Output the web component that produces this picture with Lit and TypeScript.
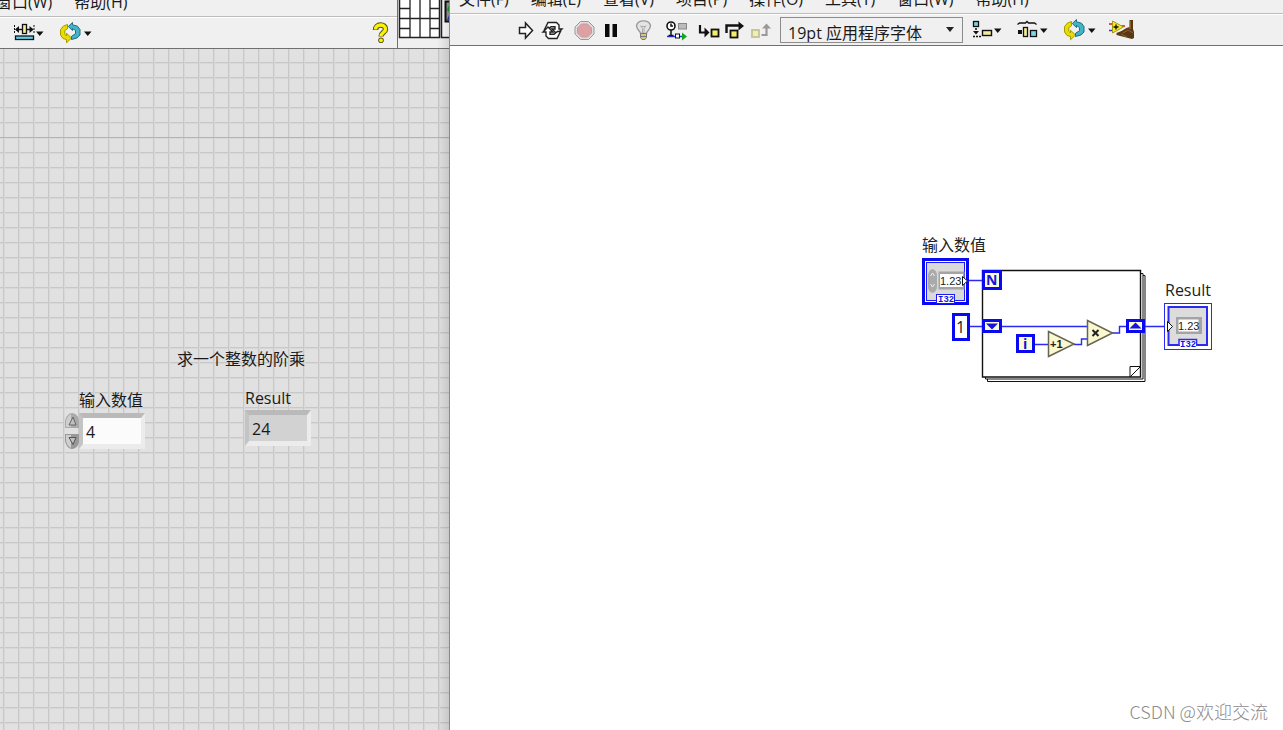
import { LitElement, html, svg, css } from "lit";
import { customElement } from "lit/decorators.js";

const caret = svg`<path d="M24 10.500h7.500l-3.750 4.500z" fill="#111" />`;

const cycle = svg`
  <path d="M9.500 3.500 L5.500 5 L2.500 8.500 V14 L5 17.500 L8.500 18.500 V21.800 L13.500 17 L8.500 12.300 V15 L6.800 13.200 V9.500 L9.500 7.800z" fill="#e8dc00" stroke="#a39b00" stroke-width="1" />
  <path d="M14.500 1.500 L10.300 5.500 L14.500 9.500 V7.500 L17.500 9.500 V12.800 L13.500 15.300 V18.500 L19 17 L22 14 V8.500 L19.500 5.200 L14.500 3.800z" fill="#43b3c9" stroke="#1f6f80" stroke-width="1" />
  <path d="M26 10.500h7.500l-3.750 4.500z" fill="#111" />`;

const icons = {
  run: svg`<path d="M7.500 9.500h6v-4.500l7 7.500-7 7.500v-4.500h-6z" fill="#fff" stroke="#222" stroke-width="1.500" />`,
  loop: svg`
    <path d="M9 4.500h8.500l2.500 2.500v4h3l-5 5-5-5h3v-2.200h-4l-3.500 2.700h-3z" fill="#fff" stroke="#222" stroke-width="1.400" />
    <path d="M18 20.500h-8.500l-2.500-2.500v-4h-3l5-5 5 5h-3v2.200h4l3.500-2.700h3z" fill="#fff" stroke="#222" stroke-width="1.400" />`,
  abort: svg`
    <path d="M9.500 3.500h8l5.500 5.500v7l-5.500 5.500h-8l-5.500-5.500v-7z" fill="#ddd" stroke="#999" />
    <path d="M10.500 6h6l4 4v5l-4 4h-6l-4-4v-5z" fill="#dea1a3" stroke="#c99" />`,
  pause: svg`<path d="M7 6h4.500v13h-4.500zM14.500 6h4.500v13h-4.500z" fill="#0a0a0a" />`,
  bulb: svg`
    <path d="M10.500 15.500c0-2.500-4-3.500-4-8a7.200 6 0 0 1 14 0c0 4.500-4 5.500-4 8z" fill="#e4e4e4" stroke="#999" stroke-width="1.400" />
    <path d="M10.500 7.500l2 3v5m3.500-8l-2 3v5M11 8.500h4.500" fill="none" stroke="#aaa" />
    <path d="M10.500 15.500h6v4l-1.500 2h-3l-1.500-2z" fill="#d8c47c" stroke="#777" /><path d="M10.500 18.500h6" stroke="#777" />`,
  retain: svg`
    <path d="M5 18.500h18" stroke="#2433e8" stroke-width="1.500" />
    <rect x="16.500" y="5.500" width="8" height="5.500" fill="#bbb" stroke="#888" />
    <circle cx="9" cy="8" r="4" fill="#fff" stroke="#111" stroke-width="1.600" />
    <path d="M9 5.500v2.500h2M9 12v5M6.500 17.500h5" stroke="#111" stroke-width="1.500" fill="none" />
    <rect x="13.500" y="16" width="4" height="4" fill="#fff" stroke="#111" />
    <path d="M20 14.500l5 4-5 4z" fill="#11a81b" />`,
  into: svg`
    <path d="M6 7v7.500h6" fill="none" stroke="#111" stroke-width="2.200" /><path d="M10.500 9.500l5 5-5 5z" fill="#111" />
    <rect x="17.500" y="11.500" width="7" height="7" fill="#f5ee66" stroke="#111" stroke-width="1.800" />`,
  over: svg`
    <path d="M5.500 15v-7.500h13" fill="none" stroke="#111" stroke-width="2.400" /><path d="M17.500 3.500l5.500 4.500-5.500 4.500z" fill="#111" />
    <rect x="9.500" y="12.500" width="7" height="7" fill="#f5ee66" stroke="#111" stroke-width="1.800" />`,
  out: svg`
    <rect x="4" y="12" width="7" height="7" fill="#efedbd" stroke="#c5c38d" stroke-width="1.800" />
    <path d="M13.500 17h5v-9" fill="none" stroke="#999" stroke-width="2.200" /><path d="M14 10.500l4.500-5 4.500 5z" fill="#999" />`,
};

const menus = {
  align: svg`
    <rect x="3.500" y="3.500" width="5" height="5" fill="#79d5ea" stroke="#111" stroke-width="1.300" />
    <path d="M6 10v5M3 18.500h8" stroke="#111" stroke-width="1.500" stroke-dasharray="2 1" /><path d="M3 13h6l-3 3.500z" fill="#111" />
    <rect x="12.500" y="12.500" width="9" height="5" fill="#f3ec9a" stroke="#111" stroke-width="1.400" />${caret}`,
  distribute: svg`
    <path d="M1.500 6.500l2-1.500h6l1.500-1.500 1.500 1.500h6l2 1.500" fill="none" stroke="#111" stroke-width="1.300" />
    <rect x="2" y="12" width="4" height="4" fill="#111" />
    <rect x="7.500" y="9.500" width="4" height="9" fill="#f3ec9a" stroke="#111" stroke-width="1.300" />
    <rect x="14.500" y="12.500" width="6" height="6" fill="#79d5ea" stroke="#111" stroke-width="1.300" />${caret}`,
  resize: svg`
    <path d="M2.500 4v9M22 4v9" stroke="#111" stroke-width="1" stroke-dasharray="2 1" />
    <path d="M4 8.500h17" stroke="#111" stroke-width="1.400" /><path d="M3 8.500l4-3.500v7zM21.500 8.500l-4-3.500v7z" fill="#111" />
    <rect x="10.500" y="3.500" width="4" height="9" fill="#f3ec9a" stroke="#111" stroke-width="1.300" />
    <rect x="3.500" y="15" width="18" height="3.500" fill="#5fd0ee" stroke="#111" stroke-width="1.300" />${caret}`,
  reorder: cycle,
  cleanup: svg`
    <path d="M1 12.500h4" stroke-width="1.500" stroke="#33d" /><path d="M1 6h4M13 8h4" stroke="#e11" stroke-width="1.500" />
    <path d="M4.500 3l11 6-11 6z" fill="#f5ea22" stroke="#a89a10" /><path d="M5.500 9h5M8 6.500v5" stroke="#111" stroke-width="1.400" />
    <path d="M21.500 2h3.500v9l1 3v6l-2 1-15.500-4v-2l5-2 5-3 3-1z" fill="#5b3714" /><path d="M15 15l5-3 5 3M13 16l6 3" stroke="#8f6430" fill="none" /><path d="M22 3v8" stroke="#b48545" />`,
};

const glyph = (w: number, body: unknown) =>
  html`<svg width=${w} height="24" viewBox="0 0 ${w} 24" aria-hidden="true">${body}</svg>`;

const base = css`
  * { box-sizing: border-box; }
  svg { display: block; }
  button, input, select {
    margin: 0; padding: 0; border: 0; background: none;
    font: inherit; color: inherit;
  }
  .menu {
    display: flex; align-items: flex-end; gap: 22px; overflow: hidden;
    border-bottom: 1px solid #bcbcbc; background: #f0f0f0;
  }
  .menu button { line-height: 24px; white-space: nowrap; flex: none; }
  .tools { display: flex; align-items: center; border-top: 1px solid #fff; background: #f0f0f0; }
  .tools button { flex: none; }
`;

@customElement("front-panel")
export class FrontPanel extends LitElement {
  static styles = [base, css`
    :host { display: flex; flex-direction: column; overflow: hidden; position: relative; background: #e1e1e1; }
    :host::after {
      content: ""; position: absolute; top: 0; right: 0; bottom: 0; width: 12px;
      background: linear-gradient(to right, #0000, #0000001c); pointer-events: none;
    }
    .head { display: flex; border-bottom: 1px solid #707070; background: #f0f0f0; flex: none; }
    .bars { flex: 1; border-right: 1px solid #707070; }
    .menu { height: 17px; padding: 0 0 2px; justify-content: flex-start; }
    .menu button:first-child { margin-left: -4px; }
    .tools { height: 31px; padding: 0 8px 0 12px; gap: 12px; }
    .help { margin-left: auto; }
    .canvas {
      position: relative; flex: 1;
      background:
        linear-gradient(#b4b4b4, #b4b4b4) 0 88px / 100% 1px no-repeat,
        linear-gradient(to right, #c8c8c8 1px, #d8d8d8 1px 2px, #0000 2px) 3px 0 / 15px 15px,
        linear-gradient(#c8c8c8 1px, #d8d8d8 1px 2px, #0000 2px) 0 13px / 15px 15px;
    }
    .item { position: absolute; line-height: 24px; white-space: nowrap; }
    .title { left: 177px; top: 298px; margin: 0; font: inherit; }
    .entry { left: 65px; top: 339px; }
    .result { left: 245px; top: 337px; }
    .entry label { display: block; padding-left: 14px; }
    .entry .row { display: flex; padding-top: 1px; }
    .spin { display: flex; flex-direction: column; gap: 2px; width: 14px; }
    .field {
      display: block; width: 66px; height: 36px; padding: 2px 0 0 3px;
      border: 4px solid; border-width: 5px 4px 5px 4px;
      border-color: #bababa #ececec #ececec #c4c4c4; background: #fbfbfb;
    }
    .field.out { background: #d2d2d2; }
    .result label { display: block; }
  `];

  render() {
    return html`
      <header class="head">
        <div class="bars">
          <nav class="menu"><button>窗口(W)</button><button>帮助(H)</button></nav>
          <div class="tools">
            <button aria-label="调整大小">${glyph(34, menus.resize)}</button>
            <button aria-label="重新排序">${glyph(34, menus.reorder)}</button>
            <button class="help" aria-label="帮助">${glyph(18, svg`
              <path d="M4.500 9c0-6.500 10-6.500 10-.8 0 3.300-4.500 3.300-4.500 7.300" fill="none" stroke="#55540a" stroke-width="5.400" />
              <circle cx="10" cy="19.300" r="2.800" fill="#55540a" />
              <path d="M4.500 8.500c0-6 10-6 10-.3 0 3.300-4.500 3.300-4.500 6.800" fill="none" stroke="#fff200" stroke-width="3.400" />
              <circle cx="10" cy="19.300" r="1.900" fill="#fff200" />`)}</button>
          </div>
        </div>
        <svg width="51" height="48" viewBox="398 0 51 48" aria-hidden="true">
          <path d="M399.500-2h40v39.500h-40z" fill="#fff" stroke="#222" stroke-width="1.500" />
          <path d="M410 0v37M420 0v37M430 0v37M400 18.500h39M400 8.500h10M430 8.500h9M400 28.500h10M430 28.500h9" stroke="#222" stroke-width="1.300" />
          <path d="M441.500-2h12v39.500h-12z" fill="#fff" stroke="#222" stroke-width="1.500" />
          <path d="M445.500 1.500h8v20h-8z" fill="#999" stroke="#111" stroke-width="2" />
          <path d="M447 10l2-5v7z" fill="#1a9c2a" /><path d="M447 20h2v-5z" fill="#223bd0" />
        </svg>
      </header>
      <main class="canvas">
        <h1 class="item title">求一个整数的阶乘</h1>
        <div class="item entry">
          <label for="n">输入数值</label>
          <div class="row">
            <div class="spin">
              <button aria-label="增加"><svg width="14" height="17" viewBox="0 0 14 17">
                <path d="M0 15V8C1 3 4 0 7 0s7 3 7 8v7z" fill="#aaa" /><path d="M1 14V8c1-4 3-6 5-7v13z" fill="#cfcfcf" />
                <path d="M4 12l4-8 3 8z" fill="#c0c0c0" stroke="#666" /></svg></button>
              <button aria-label="减少"><svg width="14" height="17" viewBox="0 0 14 17">
                <path d="M0 2v7c1 5 4 8 7 8s7-3 7-8V2z" fill="#999" /><path d="M1 3v6c1 4 3 6 5 7V3z" fill="#cfcfcf" />
                <path d="M4 5.500h7l-3 7z" fill="#c0c0c0" stroke="#555" /></svg></button>
            </div>
            <input id="n" class="field" inputmode="numeric" value="4" />
          </div>
        </div>
        <div class="item result">
          <label for="r">Result</label>
          <input id="r" class="field out" readonly value="24" />
        </div>
      </main>`;
  }
}

@customElement("block-diagram")
export class BlockDiagram extends LitElement {
  static styles = [base, css`
    :host { display: flex; flex-direction: column; background: #fff; border-left: 1px solid #8a8a8a; overflow: hidden; }
    .menu { height: 14px; padding: 0 0 2px 9px; }
    .tools { height: 32px; padding-left: 62px; gap: 5px; border-bottom: 1px solid #707070; flex: none; }
    .group { display: flex; flex: none; }
    .font { position: relative; flex: none; width: 183px; }
    .font select {
      appearance: none; display: block; width: 100%; height: 26px; padding: 4px 0 0 7px;
      border: 1px solid #8c8c8c; background: #f0f0f0; line-height: 22px;
    }
    .font svg { position: absolute; right: 9px; top: 10px; pointer-events: none; }
    .wide { gap: 12px; padding-left: 2px; }
    .canvas { position: relative; flex: 1; }
    .nodes { position: absolute; left: 470px; top: 184px; }
    .nodes text { fill: #222; }
    .small { font: 11px "Liberation Sans", sans-serif; }
    .tag { font: bold 9px "Liberation Mono", monospace; }
    .nodes .blue { fill: #1414e0; }
    .bold { font-weight: 700; }
    .mark {
      position: absolute; right: 15px; bottom: 6px; margin: 0; color: #8c8c8c;
      font: 300 18px/26px "Noto Sans CJK SC", sans-serif;
    }
  `];

  render() {
    const names = ["文件(F)", "编辑(E)", "查看(V)", "项目(P)", "操作(O)", "工具(T)", "窗口(W)", "帮助(H)"];
    const groups = [
      [["运行", icons.run], ["连续运行", icons.loop]],
      [["中止", icons.abort], ["暂停", icons.pause]],
      [["高亮显示", icons.bulb]],
      [["保存连线值", icons.retain]],
      [["步入", icons.into], ["步过", icons.over], ["步出", icons.out]],
    ];
    const arranging = [["对齐", menus.align], ["分布", menus.distribute], ["重新排序", menus.reorder], ["整理", menus.cleanup]];
    return html`
      <nav class="menu">${names.map((n) => html`<button>${n}</button>`)}</nav>
      <div class="tools">
        ${groups.map((g) => html`<div class="group">
          ${g.map(([label, body]) => html`<button aria-label=${label}>${glyph(27, body)}</button>`)}
        </div>`)}
        <div class="font">
          <select aria-label="字体"><option>19pt 应用程序字体</option></select>
          <svg width="8" height="5" viewBox="0 0 8 5"><path d="M0 0h8L4 5z" fill="#222" /></svg>
        </div>
        <div class="group wide">
          ${arranging.map(([label, body]) => html`<button aria-label=${label}>${glyph(34, body)}</button>`)}
        </div>
      </div>
      <main class="canvas">
        <svg class="nodes" width="296" height="156" viewBox="920 230 296 156" font-size="16">
          <text x="922" y="251">输入数值</text>
          <text x="1165" y="296">Result</text>

          <path d="M987.500 275.500h157.500v106h-157.500z" fill="#fff" stroke="#111" />
          <path d="M985.500 273.500h157.500v105.500h-157.500z" fill="#fff" stroke="#111" />
          <path d="M982.500 270.500h158v106.500h-158z" fill="#fff" stroke="#111" stroke-width="1.400" />
          <path d="M1130 377v-10.500h10.500zM1130 377l10.500-10.500" fill="#fff" stroke="#111" />

          <path d="M968 280.500h14M970 326.500h12M1001 326.500h86M1035 344.500h13M1074 344.500h7.500v-5.500h6M1112 333h7.500v-6.500h7M1144 326.500h21"
            fill="none" stroke="#2a2af0" stroke-width="1.400" />

          <rect x="923.500" y="259.500" width="44" height="44" fill="#fff" stroke="#0a0af0" stroke-width="3" />
          <rect x="926.500" y="262.500" width="38" height="38" fill="#d9d9d9" stroke="#1a1af0" />
          <path d="M928 276c0-9 9-9 9 0v10c0 9-9 9-9 0z" fill="#aaa" /><path d="M930.500 276l2-3 2 3M930.500 284l2 3 2-3" fill="none" stroke="#eee" />
          <rect x="938.500" y="271.500" width="26" height="18" fill="#a4a4a4" />
          <rect x="940" y="274" width="23" height="13" fill="#fff" />
          <text class="small" x="940" y="285">1.23</text>
          <path d="M962.500 276.500v9l5-4.500z" fill="#fff" stroke="#111" />
          <rect x="936.500" y="294.500" width="18" height="9" fill="#fff" stroke="#1a1af0" />
          <text class="tag blue" x="938" y="302">I32</text>

          <rect x="983.500" y="271.500" width="17" height="17" fill="#fdfbd6" stroke="#0a0af0" stroke-width="3" />
          <text class="blue bold" x="986" y="285" font-size="14">N</text>
          <rect x="953.500" y="314.500" width="15" height="25" fill="#fff" stroke="#0a0af0" stroke-width="3" />
          <text x="956" y="333">1</text>
          <rect x="983.500" y="320.500" width="17" height="11" fill="#fdfbd6" stroke="#0a0af0" stroke-width="3" />
          <path d="M986 323.500h12l-6 6z" fill="#1414e0" />
          <rect x="1127.500" y="320.500" width="16" height="11" fill="#fdfbd6" stroke="#0a0af0" stroke-width="3" />
          <path d="M1129.500 328.500h12l-6-6z" fill="#1414e0" />
          <rect x="1017.500" y="335.500" width="16" height="16" fill="#fdfbd6" stroke="#0a0af0" stroke-width="3" />
          <text class="blue bold" x="1023" y="349" font-size="14">i</text>

          <path d="M1048.500 331.500v25l25.500-12.500z" fill="#fbf8cf" stroke="#66654f" stroke-width="1.500" />
          <text class="small bold" x="1050" y="348">+1</text>
          <path d="M1087.500 320.500v25l25-12.500z" fill="#fbf8cf" stroke="#66654f" stroke-width="1.500" />
          <path d="M1092.500 330l6 6m0-6l-6 6" stroke="#222" stroke-width="2" />

          <rect x="1164.500" y="303.500" width="47" height="46" fill="#fff" stroke="#2a2af0" />
          <rect x="1168.500" y="307" width="38.500" height="38" fill="#dcdcdc" stroke="#2a2af0" stroke-width="2" />
          <rect x="1176" y="317" width="26" height="17" fill="#a4a4a4" />
          <rect x="1178.500" y="319.500" width="20" height="12" fill="#fff" />
          <text class="small" x="1178" y="330">1.23</text>
          <path d="M1167.500 321.500v10l5-5z" fill="#fff" stroke="#111" />
          <path d="M1179 345v-5.500h17.500v5.500" fill="#fff" stroke="#2a2af0" stroke-width="1.500" />
          <rect x="1180" y="341" width="16" height="7" fill="#fff" />
          <text class="tag blue" x="1180" y="347">I32</text>
        </svg>
        <p class="mark">CSDN @欢迎交流</p>
      </main>`;
  }
}

@customElement("app-root")
export class AppRoot extends LitElement {
  static styles = css`
    :host {
      display: flex; height: 100vh; overflow: hidden; color: #1a1a1a;
      font: 16px/24px "Open Sans", "Noto Sans CJK SC", sans-serif;
    }
    front-panel { flex: 0 0 35%; }
    block-diagram { flex: 1; min-width: 0; }
  `;

  render() {
    return html`<front-panel></front-panel><block-diagram></block-diagram>`;
  }
}
